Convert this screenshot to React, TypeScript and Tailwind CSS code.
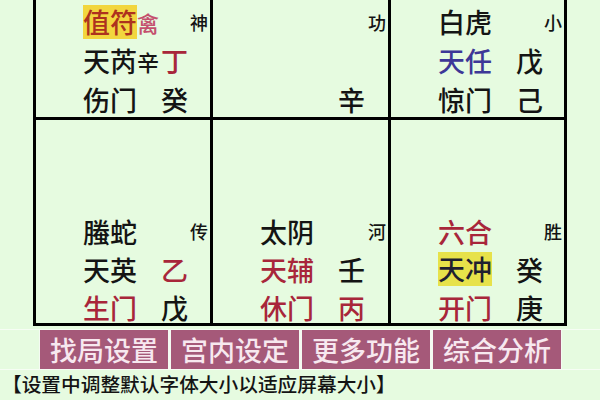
import React from "react";

interface RowData {
    main?: string;
    mainCls?: string;
    hl?: string;
    small?: string;
    smallCls?: string;
    stem?: string;
    stemCls?: string;
    tag?: string;
}

const RED = "text-[#a8263a]";
const INK = "text-[#141414]";

const Row = ({ row, h }: { row: RowData; h: string }) => (
    <div className={`flex items-center ${h}`}>
        <span className={`w-[54px] shrink-0 text-[27px] leading-none ${row.mainCls ?? INK}`}>
            {row.hl ? <span className={`inline-block leading-[34px] ${row.hl}`}>{row.main}</span> : row.main}
        </span>
        <span className={`w-[24px] shrink-0 text-[22px] leading-none ${row.smallCls ?? INK}`}>{row.small}</span>
        <span className={`w-[28px] shrink-0 text-[27px] leading-none ${row.stemCls ?? INK}`}>{row.stem}</span>
        {row.tag && <span className="ml-auto pr-[2px] text-[18px] leading-none text-[#141414]">{row.tag}</span>}
    </div>
);

const topCells: { w: string; rows: RowData[] }[] = [
    {
        w: "w-[177px]",
        rows: [
            { main: "值符", mainCls: "text-[#ad321e]", hl: "bg-[#f2d63e]", small: "禽", smallCls: "text-[#c4506e]", tag: "神" },
            { main: "天芮", small: "辛", stem: "丁", stemCls: RED },
            { main: "伤门", stem: "癸" },
        ],
    },
    {
        w: "w-[178px]",
        rows: [{ tag: "功" }, {}, { stem: "辛" }],
    },
    {
        w: "w-[176px]",
        rows: [
            { main: "白虎", tag: "小" },
            { main: "天任", mainCls: "text-[#3d3797]", stem: "戊" },
            { main: "惊门", stem: "己" },
        ],
    },
];

const bottomCells: { w: string; rows: RowData[] }[] = [
    {
        w: "w-[177px]",
        rows: [
            { main: "螣蛇", tag: "传" },
            { main: "天英", stem: "乙", stemCls: RED },
            { main: "生门", mainCls: RED, stem: "戊" },
        ],
    },
    {
        w: "w-[178px]",
        rows: [
            { main: "太阴", tag: "河" },
            { main: "天辅", mainCls: RED, stem: "壬" },
            { main: "休门", mainCls: RED, stem: "丙", stemCls: RED },
        ],
    },
    {
        w: "w-[176px]",
        rows: [
            { main: "六合", mainCls: RED, tag: "胜" },
            { main: "天冲", mainCls: "text-[#1f1f30]", hl: "bg-[#e7e24a]", stem: "癸" },
            { main: "开门", mainCls: RED, stem: "庚" },
        ],
    },
];

const buttons = ["找局设置", "宫内设定", "更多功能", "综合分析"];

export default function App() {
    return (
        <div className="w-[600px] h-[400px] overflow-hidden bg-[#e6fbe0] font-medium font-['Noto_Sans_CJK_SC',sans-serif]">
            {/* Palace grid, top row scrolled partly off screen */}
            <div className="ml-[33px] w-[534px] border-l-[3px] border-b-[3px] border-black">
                <div className="flex h-[120px] border-b-[3px] border-black">
                    {topCells.map((cell, i) => (
                        <div key={i} className={`${cell.w} h-full border-r-[3px] border-black pl-[47px] pt-[2px]`}>
                            {cell.rows.map((r, j) => (
                                <Row key={j} row={r} h="h-[39px]" />
                            ))}
                        </div>
                    ))}
                </div>
                <div className="flex h-[203px]">
                    {bottomCells.map((cell, i) => (
                        <div key={i} className={`${cell.w} h-full border-r-[3px] border-black pl-[47px] pt-[92px]`}>
                            {cell.rows.map((r, j) => (
                                <Row key={j} row={r} h="h-[38px]" />
                            ))}
                        </div>
                    ))}
                </div>
            </div>

            <div className="mt-[3px] border-y border-[#f6fdf4] pl-[39px]">
                <div className="flex w-fit gap-[3px] bg-[#f4faf2] px-[1px]">
                    {buttons.map((b) => (
                        <button
                            key={b}
                            className="flex h-[39px] w-[128px] items-center justify-center bg-[#a55979] text-[27px] leading-none text-[#f7e8ef]"
                        >
                            {b}
                        </button>
                    ))}
                </div>
            </div>

            <p className="mt-[1px] pl-[2px] text-[19.7px] leading-[26px] text-[#141414]">【设置中调整默认字体大小以适应屏幕大小】</p>
        </div>
    );
}
